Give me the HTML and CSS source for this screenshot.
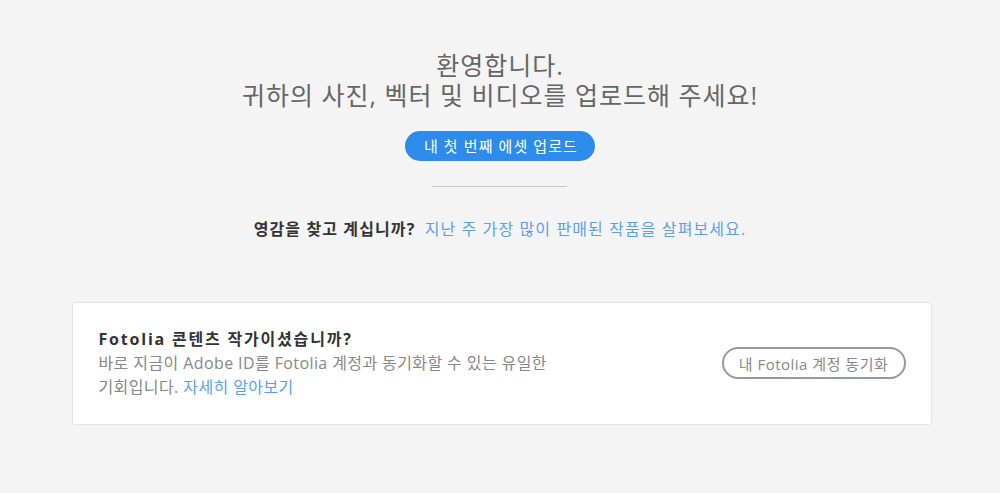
FILE: index.html
```html
<!DOCTYPE html>
<html lang="ko">
<head>
<meta charset="utf-8">
<link rel="stylesheet" href="styles.css">
</head>
<body>
<main class="page">
  <section class="hero">
    <h1 class="title">환영합니다.<br>귀하의 사진, 벡터 및 비디오를 업로드해 주세요!</h1>
    <button class="primary">내 첫 번째 에셋 업로드</button>
    <hr class="divider">
    <p class="inspire"><strong>영감을 찾고 계십니까?</strong> <a href="#">지난 주 가장 많이 판매된 작품을 살펴보세요.</a></p>
  </section>
  <section class="card">
    <div class="card-text">
      <h2 class="card-title">Fotolia 콘텐츠 작가이셨습니까?</h2>
      <p class="card-body">바로 지금이 Adobe ID를 Fotolia 계정과 동기화할 수 있는 유일한 기회입니다. <a href="#">자세히 알아보기</a></p>
    </div>
    <button class="outline">내 Fotolia 계정 동기화</button>
  </section>
</main>
</body>
</html>
```
FILE: styles.css
```css
html, body {
  margin: 0;
  padding: 0;
  background: #f4f4f4;
}
body {
  font-family: "Open Sans", "Noto Sans CJK KR", sans-serif;
  color: #333;
}
.page {
  display: flex;
  flex-direction: column;
  align-items: center;
  padding-top: 50px;
}
.hero {
  display: flex;
  flex-direction: column;
  align-items: center;
}
.title {
  margin: 0;
  font-size: 25px;
  font-weight: 400;
  line-height: 30px;
  letter-spacing: 1px;
  color: #666;
  text-align: center;
}
.primary {
  margin-top: 21px;
  height: 30px;
  padding: 0 17px 0 19px;
  border: none;
  border-radius: 15px;
  background: #2d8ceb;
  color: #fff;
  font-family: inherit;
  font-size: 15px;
  letter-spacing: 1.1px;
  line-height: 30px;
}
.divider {
  margin: 25px 0 0;
  width: 135px;
  border: none;
  border-top: 1px solid #c8c8c8;
}
.inspire {
  margin: 32px 0 0;
  font-size: 16px;
  line-height: 20px;
  letter-spacing: 1.1px;
}
.inspire strong {
  font-weight: 700;
  color: #333;
  margin-right: 4px;
}
a {
  color: #5b9ff0;
  text-decoration: none;
}
.card {
  box-sizing: border-box;
  width: 860px;
  margin-top: 63px;
  margin-left: 3px;
  padding: 24px 25px 25px 26px;
  background: #fff;
  border: 1px solid #e3e3e3;
  border-radius: 3px;
  display: flex;
  align-items: center;
  justify-content: space-between;
}
.card-text {
  width: 470px;
  word-break: keep-all;
}
.card-title {
  margin: 0;
  font-size: 16px;
  font-weight: 700;
  line-height: 24px;
  letter-spacing: 1.8px;
  color: #333;
}
.card-body {
  margin: 0;
  font-size: 16px;
  line-height: 24px;
  letter-spacing: 0.4px;
  color: #888;
}
.outline {
  height: 32px;
  width: 184px;
  border: 2px solid #999;
  border-radius: 16px;
  background: #fff;
  color: #888;
  font-family: inherit;
  font-size: 15px;
  letter-spacing: 0.5px;
  padding: 0;
}
```
